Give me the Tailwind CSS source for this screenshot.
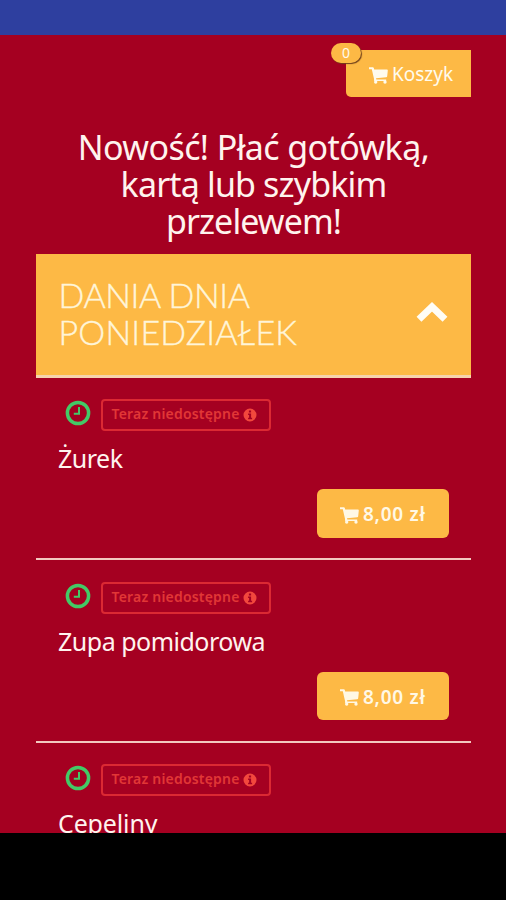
<!DOCTYPE html>
<html lang="pl">
<head>
<meta charset="utf-8">
<title>Menu</title>
<script src="https://cdn.jsdelivr.net/npm/@tailwindcss/browser@4"></script>
</head>
<body class="bg-black">
<svg class="hidden">
  <symbol id="cart" viewBox="0 0 19 17"><path d="M0 .3h3.800q.8 0 1 .8l.4 1.500H18q.8 0 .8.8l-.6 5.900q-.1.900-1 1L7 11.200l.3 1.200h9.900v1.700H5.700q-.8 0-.8-.8l.2-1.100L2.800 2.200H0z"/><circle cx="6.700" cy="15.100" r="1.700"/><circle cx="16" cy="15.100" r="1.700"/></symbol>
  <symbol id="clock" viewBox="0 0 26 26"><circle cx="13" cy="13" r="10.600" fill="none" stroke="currentColor" stroke-width="3.500"/><path d="M14 7v6.800H8.800" fill="none" stroke="currentColor" stroke-width="2"/></symbol>
  <symbol id="info" viewBox="0 0 14 14"><path fill-rule="evenodd" d="M7 .5a6.500 6.500 0 1 0 0 13a6.500 6.500 0 0 0 0-13zM5.900 2.500h2.200v2H5.900zM5.100 5.600h3v4.200h1v1.500h-4V9.800h1V7.100h-1z"/></symbol>
</svg>
<div class="w-[506px] h-[900px] flex flex-col overflow-hidden font-['Noto_Sans','Open_Sans',sans-serif]">
  <div class="h-[35px] shrink-0 bg-[#2e3f9f]"></div>
  <main class="h-[798px] shrink-0 overflow-hidden bg-[#a50021] pl-[36px] pr-[35px] pt-[14.500px] text-[#fff3ee]">
    <div class="flex justify-end">
      <div class="relative w-[125px] h-[47.500px] rounded-l-[5px] bg-[#fdb945] flex items-center pl-[23px] pt-[2px] text-[#fffbed]">
        <svg class="w-[19px] h-[17px] fill-current mt-[2px]"><use href="#cart"/></svg>
        <span class="ml-[4px] text-[19px] leading-6 whitespace-nowrap">Koszyk</span>
        <span class="absolute left-[-15px] top-[-7px] w-[30px] h-[20px] rounded-full bg-[#fdb945] shadow-[1px_1px_1px_#70401a] text-[14px] leading-[20px] text-center">0</span>
      </div>
    </div>
    <h1 class="mt-[32px] h-[111px] text-center text-[34px] leading-[37px] whitespace-nowrap"><span class="tracking-[-0.600px]">Nowość! Płać gotówką,</span><br><span class="tracking-[-0.850px]">kartą lub szybkim</span><br><span class="tracking-[-0.900px]">przelewem!</span></h1>
    <section class="mt-[14px] h-[124px] bg-[#fdb945] border-b-[3px] border-[#f6d2ad] flex items-center justify-between pl-[22.500px] pr-[23px]">
      <h2 class="-mt-[3px] text-[34px] leading-[37px] font-light font-['Lato',sans-serif] text-[#fff5d8] whitespace-nowrap [-webkit-text-stroke:0.400px_#fff5d8]"><span class="tracking-[-0.400px]">DANIA DNIA</span><br><span class="tracking-[0.200px]">PONIEDZIAŁEK</span></h2>
      <svg class="w-[32px] h-[22px] -mt-[6px]" viewBox="0 0 32 22"><path d="M3 18.300L16 5.800l13 12.500" fill="none" stroke="#fffdf5" stroke-width="7"/></svg>
    </section>
    <article class="h-[182px] border-b-2 border-[#f3c9c0] px-[22px] pt-[21px]">
      <div class="flex h-[32px] pl-[6.500px]">
        <svg class="w-[26px] h-[26px] text-[#43ca66] mt-[1px]"><use href="#clock"/></svg>
        <span class="ml-[10px] w-[170px] h-[32px] border-2 border-[#db2933] rounded-[4px] flex items-center pl-[9px] text-[#e13736] text-[14px] leading-5 font-semibold whitespace-nowrap"><span class="w-[129px] -mt-[2px] tracking-[0.200px]">Teraz niedostępne</span><svg class="w-[14px] h-[14px] ml-[2px] fill-[#f2483d]"><use href="#info"/></svg></span>
      </div>
      <h3 class="mt-[10px] text-[25px] leading-[34px] whitespace-nowrap tracking-[-0.500px]">Żurek</h3>
      <div class="flex justify-end mt-[14px]"><button class="w-[132px] h-[48.500px] rounded-[6px] bg-[#fdb945] text-[#fff8e5] flex items-center pl-[23px] text-[19px] font-semibold whitespace-nowrap"><svg class="w-[19px] h-[17px] fill-current mt-[4px]"><use href="#cart"/></svg><span class="ml-[4px] mt-[2px] tracking-[0.750px]">8,00 zł</span></button></div>
    </article>
    <article class="h-[182.500px] border-b-2 border-[#f3c9c0] px-[22px] pt-[21.500px]">
      <div class="flex h-[32px] pl-[6.500px]">
        <svg class="w-[26px] h-[26px] text-[#43ca66] mt-[1px]"><use href="#clock"/></svg>
        <span class="ml-[10px] w-[170px] h-[32px] border-2 border-[#db2933] rounded-[4px] flex items-center pl-[9px] text-[#e13736] text-[14px] leading-5 font-semibold whitespace-nowrap"><span class="w-[129px] -mt-[2px] tracking-[0.200px]">Teraz niedostępne</span><svg class="w-[14px] h-[14px] ml-[2px] fill-[#f2483d]"><use href="#info"/></svg></span>
      </div>
      <h3 class="mt-[10px] text-[25px] leading-[34px] whitespace-nowrap tracking-[-0.500px]">Zupa pomidorowa</h3>
      <div class="flex justify-end mt-[14px]"><button class="w-[132px] h-[48.500px] rounded-[6px] bg-[#fdb945] text-[#fff8e5] flex items-center pl-[23px] text-[19px] font-semibold whitespace-nowrap"><svg class="w-[19px] h-[17px] fill-current mt-[4px]"><use href="#cart"/></svg><span class="ml-[4px] mt-[2px] tracking-[0.750px]">8,00 zł</span></button></div>
    </article>
    <article class="px-[22px] pt-[21px]">
      <div class="flex h-[32px] pl-[6.500px]">
        <svg class="w-[26px] h-[26px] text-[#43ca66] mt-[1px]"><use href="#clock"/></svg>
        <span class="ml-[10px] w-[170px] h-[32px] border-2 border-[#db2933] rounded-[4px] flex items-center pl-[9px] text-[#e13736] text-[14px] leading-5 font-semibold whitespace-nowrap"><span class="w-[129px] -mt-[2px] tracking-[0.200px]">Teraz niedostępne</span><svg class="w-[14px] h-[14px] ml-[2px] fill-[#f2483d]"><use href="#info"/></svg></span>
      </div>
      <h3 class="mt-[10px] text-[25px] leading-[34px] whitespace-nowrap tracking-[-0.150px]">Cepeliny</h3>
    </article>
  </main>
</div>
</body>
</html>
